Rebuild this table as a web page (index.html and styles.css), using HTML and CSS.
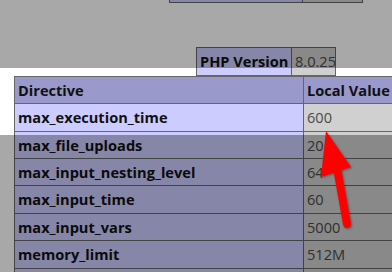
FILE: index.html
```html
<!DOCTYPE html>
<html>
<head>
<meta charset="utf-8">
<link rel="stylesheet" href="styles.css">
</head>
<body>
<div class="page">
  <table class="info top">
    <tr><td class="e">&nbsp;</td><td class="v">&nbsp;</td></tr>
  </table>
  <table class="info ver">
    <tr><td class="e">PHP Version</td><td class="v">8.0.25</td></tr>
  </table>
  <table class="info main">
    <tr class="h"><th class="c1">Directive</th><th class="c2">Local Value</th></tr>
    <tr><td class="e">max_execution_time</td><td class="v">600</td></tr>
    <tr><td class="e">max_file_uploads</td><td class="v">20</td></tr>
    <tr><td class="e">max_input_nesting_level</td><td class="v">64</td></tr>
    <tr><td class="e">max_input_time</td><td class="v">60</td></tr>
    <tr><td class="e">max_input_vars</td><td class="v">5000</td></tr>
    <tr><td class="e">memory_limit</td><td class="v">512M</td></tr>
    <tr><td class="e">&nbsp;</td><td class="v">&nbsp;</td></tr>
  </table>
</div>
<div class="spot"></div>
<svg class="arrow" width="392" height="272" viewBox="0 0 392 272">
  <line x1="337" y1="168" x2="347" y2="224" stroke="#ff0000" stroke-width="8" stroke-linecap="round"/>
  <polygon points="326,131 321,177 351,167" fill="#ff0000"/>
</svg>
</body>
</html>
```

FILE: styles.css
```css
html, body {
  margin: 0;
  padding: 0;
  overflow: hidden;
  background: #ffffff;
}

body {
  position: relative;
  width: 392px;
  height: 272px;
  font-family: "Open Sans", "Noto Sans", sans-serif;
  font-size: 14.6px;
  color: #111111;
}

.page {
  display: flex;
  flex-direction: column;
  align-items: flex-start;
}

.info {
  border-collapse: collapse;
  table-layout: fixed;
  flex: none;
}

.info td,
.info th {
  border: 1px solid #666666;
  padding: 3px 2px 3px 3px;
  line-height: 20.4px;
  text-align: left;
  white-space: nowrap;
  overflow: hidden;
}

.e {
  background: #ccccff;
  font-weight: bold;
}

.v {
  background: #d0d0d0;
  color: #4a4a4a;
}

.h th {
  background: #9999cc;
  font-weight: bold;
}

.top {
  margin: -25px 0 0 169px;
  width: 194px;
}

.top .e {
  width: 127px;
}

.ver {
  margin: 44px 0 0 196px;
  width: 140px;
}

.ver .e {
  width: 89px;
}

.main {
  margin: 0 0 0 14px;
  width: 480px;
}

.main .c1 {
  width: 283px;
}

.spot {
  position: absolute;
  left: 0;
  top: 68px;
  width: 392px;
  height: 67px;
  box-shadow: 0 0 0 2000px rgba(0, 0, 0, 0.34);
}

.arrow {
  position: absolute;
  left: 0;
  top: 0;
  filter: drop-shadow(1px 1px 1px rgba(0, 0, 0, 0.35));
}
```
